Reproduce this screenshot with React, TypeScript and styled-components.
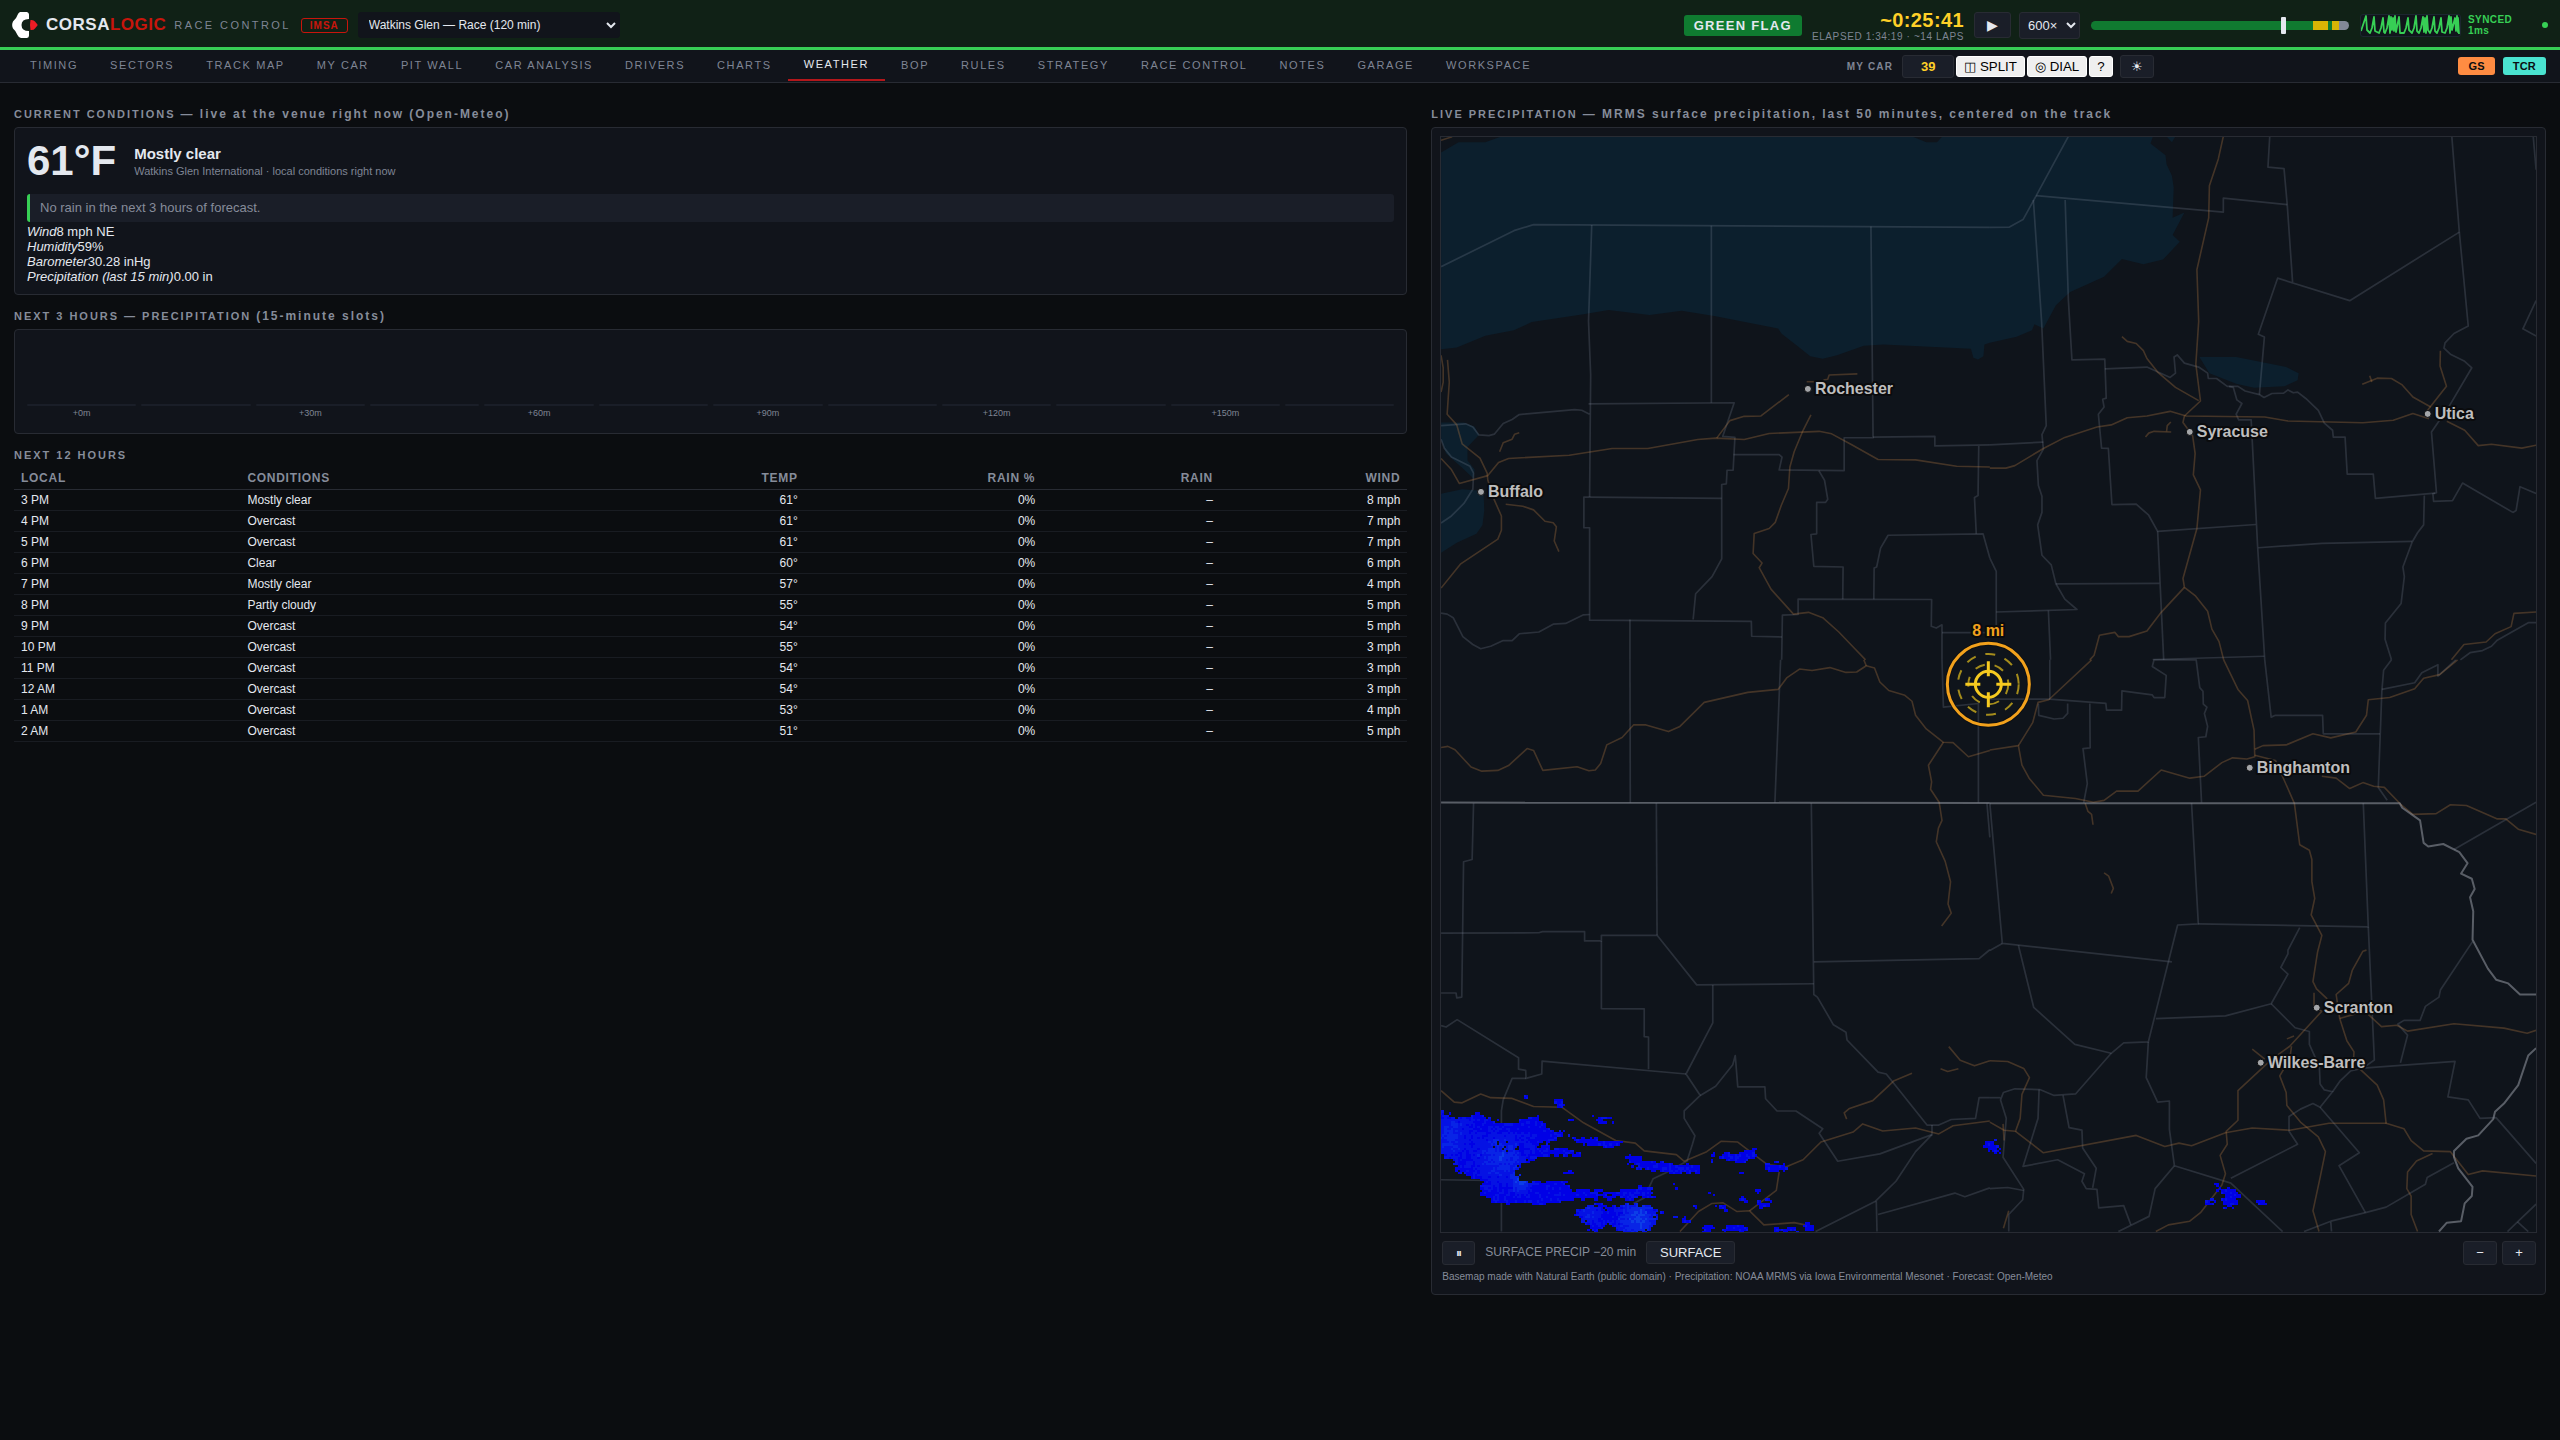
import React from 'react';
import styled, { createGlobalStyle, css } from 'styled-components';

const c = {
  bg: '#0b0d10',
  panel: '#11141b',
  raised: '#1a1e28',
  line: '#282b33',
  text: '#e4e8ef',
  muted: '#7f8594',
  heading: '#868c9a',
  red: '#c8150c',
  green: '#37cf55',
  yellow: '#ffd028',
};

const GlobalStyle = createGlobalStyle`
  *, *::before, *::after { box-sizing: border-box; }
  body {
    margin: 0;
    background: ${c.bg};
    color: ${c.text};
    font: 13px/15px "Liberation Sans", Arial, sans-serif;
  }
`;

/* ---------- header ---------- */

const Header = styled.header`
  display: flex;
  align-items: center;
  height: 50px;
  padding: 3px 12px 0;
  background: #102116;
  border-bottom: 3px solid ${c.green};
`;

const Brand = styled.div`
  display: flex;
  align-items: center;
  gap: 8px;
`;

const BrandName = styled.h1`
  margin: 0;
  font-size: 17px;
  line-height: 20px;
  font-weight: 700;
  letter-spacing: 0.03em;
  span { color: ${c.red}; }
`;

const BrandSub = styled.span`
  font-size: 11px;
  color: ${c.muted};
  letter-spacing: 0.22em;
`;

const SeriesPill = styled.span`
  margin: 0 10px;
  padding: 1px 8px;
  border: 1px solid ${c.red};
  border-radius: 3px;
  color: ${c.red};
  font-size: 10px;
  line-height: 11px;
  font-weight: 700;
  letter-spacing: 0.1em;
`;

const Select = styled.select<{ $wide?: boolean }>`
  font: ${p => (p.$wide ? 12 : 13)}px "Liberation Sans", Arial, sans-serif;
  color: ${c.text};
  background: ${p => (p.$wide ? c.panel : c.raised)};
  border: 1px solid ${p => (p.$wide ? c.panel : c.line)};
  border-radius: 3px;
  width: ${p => (p.$wide ? 262 : 61)}px;
  height: ${p => (p.$wide ? 26 : 27)}px;
  padding: 0 ${p => (p.$wide ? 6 : 4)}px;
`;

const HeaderRight = styled.div`
  display: flex;
  align-items: center;
  gap: 10px;
  margin-left: auto;
`;

const FlagBadge = styled.strong`
  padding: 3px 10px;
  border-radius: 3px;
  background: #0f7b30;
  font-size: 13px;
  letter-spacing: 0.1em;
`;

const Clock = styled.div`
  text-align: right;
  strong {
    display: block;
    font-size: 20px;
    line-height: 22px;
    letter-spacing: 0.02em;
    color: ${c.yellow};
  }
  span {
    display: block;
    font-size: 10px;
    line-height: 11px;
    letter-spacing: 0.06em;
    color: ${c.muted};
  }
`;

const DarkButton = styled.button<{ $w: number; $h?: number; $size?: number }>`
  display: inline-flex;
  align-items: center;
  justify-content: center;
  width: ${p => p.$w}px;
  height: ${p => p.$h ?? 24}px;
  padding: 0;
  border: 1px solid ${c.line};
  border-radius: 3px;
  background: ${c.raised};
  color: ${c.text};
  font: ${p => p.$size ?? 13}px "Liberation Sans", Arial, sans-serif;
`;

const Playback = styled.div`
  display: flex;
  align-items: center;
  gap: 8px;
`;

const thumb = css`
  width: 5px;
  height: 17px;
  border: 0;
  border-radius: 1px;
  background: ${c.text};
`;

const Scrubber = styled.input`
  appearance: none;
  width: 258px;
  height: 17px;
  margin: 0 1px;
  background: transparent;
  &::-webkit-slider-runnable-track {
    height: 9px;
    border-radius: 5px;
    background: linear-gradient(
      90deg,
      #107a30 0 86%, #d9b505 86% 92%, #107a30 92% 93.5%,
      #d9b505 93.5% 96.2%, #828896 96.2%
    );
  }
  &::-webkit-slider-thumb {
    appearance: none;
    margin-top: -4px;
    ${thumb}
  }
`;

const Pulse = styled.svg`
  display: block;
  width: 101px;
  height: 23px;
  border: 1px solid #1c2630;
  border-radius: 3px;
  background: #10161b;
`;

const Sync = styled.div`
  width: 64px;
  margin-left: -3px;
  color: ${c.green};
  font-size: 10px;
  line-height: 11px;
  font-weight: 700;
  letter-spacing: 0.04em;
`;

const StatusDot = styled.i`
  width: 6px;
  height: 6px;
  border-radius: 50%;
  background: ${c.green};
`;

/* ---------- navigation ---------- */

const Nav = styled.nav`
  display: flex;
  align-items: center;
  justify-content: space-between;
  height: 33px;
  padding: 0 14px;
  background: ${c.panel};
  border-bottom: 1px solid ${c.line};
`;

const Tabs = styled.div`
  display: flex;
  align-self: stretch;
`;

const Tab = styled.a<{ $active?: boolean }>`
  display: flex;
  align-items: center;
  padding: 0 16px;
  margin-bottom: 1px;
  border-bottom: ${p => (p.$active ? '2px solid #b3171b' : '0')};
  color: ${p => (p.$active ? c.text : c.muted)};
  font-size: 11px;
  letter-spacing: 0.145em;
  text-decoration: none;
`;

const Tools = styled.div`
  display: flex;
  align-items: center;
  gap: 2px;
  margin-right: 5px;
`;

const CarLabel = styled.label`
  margin-right: 7px;
  color: ${c.muted};
  font-size: 10px;
  font-weight: 700;
  letter-spacing: 0.12em;
`;

const CarInput = styled.input`
  width: 52px;
  height: 23px;
  border: 1px solid ${c.line};
  border-radius: 3px;
  padding: 0;
  background: ${c.raised};
  color: ${c.yellow};
  text-align: center;
  font: 700 13px "Liberation Sans", Arial, sans-serif;
`;

const LightButton = styled.button`
  height: 21px;
  padding: 0 7px;
  border: 1px solid #fff;
  border-radius: 3px;
  background: #efefef;
  color: #000;
  font-family: "Liberation Sans", Arial, sans-serif;
`;

const ThemeSlot = styled.span`
  display: flex;
  margin-left: 5px;
`;

const ClassTags = styled.div`
  display: flex;
  gap: 8px;
`;

const ClassTag = styled.span<{ $color: string }>`
  padding: 3px 10px;
  border-radius: 3px;
  background: ${p => p.$color};
  color: #0b0d10;
  font-size: 11px;
  line-height: 12px;
  font-weight: 700;
  letter-spacing: 0.02em;
`;

/* ---------- page ---------- */

const Main = styled.main`
  display: grid;
  grid-template-columns: minmax(0, 1.25fr) minmax(0, 1fr);
  align-items: start;
  gap: 24px;
  padding: 24px 14px;
`;

const Column = styled.div`
  display: flex;
  flex-direction: column;
  gap: 14px;
`;

const SectionTitle = styled.h2`
  margin: 0 0 6px;
  color: ${c.heading};
  font-size: 11px;
  line-height: 14px;
  font-weight: 700;
  letter-spacing: 0.18em;
  span { font-size: 12px; }
`;

const Card = styled.div<{ $tight?: boolean }>`
  padding: ${p => (p.$tight ? '8px' : '10px 12px')};
  border: 1px solid ${c.line};
  border-radius: 4px;
  background: ${c.panel};
`;

const Now = styled.div`
  display: flex;
  align-items: center;
  gap: 18px;
  margin-bottom: 10px;
`;

const Temp = styled.strong`
  font-size: 42px;
  line-height: 46px;
`;

const Summary = styled.div`
  strong {
    display: block;
    margin-bottom: 3px;
    font-size: 15px;
    line-height: 17px;
  }
  span {
    display: block;
    color: ${c.muted};
    font-size: 11px;
    line-height: 13px;
  }
`;

const Outlook = styled.p`
  margin: 0 0 2px;
  padding: 7px 10px;
  border-left: 3px solid ${c.green};
  border-radius: 3px;
  background: ${c.raised};
  color: ${c.heading};
  line-height: 14px;
`;

const Slots = styled.div`
  display: grid;
  grid-template-columns: repeat(12, 1fr);
  gap: 5px;
  height: 83px;
`;

const Slot = styled.div`
  display: grid;
  grid-template-rows: 66px 12px;
  align-items: end;
  text-align: center;
  color: ${c.muted};
  font-size: 9px;
  line-height: 10px;
`;

const SlotBar = styled.div`
  height: 2px;
  border-radius: 1px;
  background: ${c.raised};
`;

const Table = styled.table`
  width: 100%;
  table-layout: fixed;
  border-collapse: collapse;
  font-size: 12px;
  line-height: 14px;
`;

const Cell = styled.td<{ $right?: boolean }>`
  height: 21px;
  padding: 3px 7px;
  border-bottom: 1px solid #191c22;
  text-align: ${p => (p.$right ? 'right' : 'left')};
`;

const HeadCell = styled(Cell)`
  border-bottom-color: ${c.line};
  color: ${c.heading};
  font-weight: 700;
  letter-spacing: 0.06em;
`;

const MapCanvas = styled.svg`
  display: block;
  width: 100%;
  aspect-ratio: 1;
  border: 1px solid ${c.line};
  background: #0f141b;
`;

const CityText = styled.text<{ $accent?: boolean }>`
  font: 700 16px "Liberation Sans", Arial, sans-serif;
  fill: ${p => (p.$accent ? '#f2a11c' : '#bebebe')};
  stroke: #0a0b0d;
  stroke-width: 4px;
  stroke-linejoin: round;
  paint-order: stroke;
`;

const MapControls = styled.div`
  display: flex;
  align-items: center;
  gap: 10px;
  padding: 8px 1px 6px 2px;
  color: ${c.heading};
  font-size: 12px;
`;

const ZoomButtons = styled.div`
  display: flex;
  gap: 5px;
  margin-left: auto;
`;

const Credits = styled.p`
  margin: 0 2px 3px;
  color: ${c.heading};
  font-size: 10px;
  line-height: 12px;
`;

/* ---------- data ---------- */

const tabs = ['TIMING', 'SECTORS', 'TRACK MAP', 'MY CAR', 'PIT WALL', 'CAR ANALYSIS', 'DRIVERS', 'CHARTS', 'WEATHER', 'BOP', 'RULES', 'STRATEGY', 'RACE CONTROL', 'NOTES', 'GARAGE', 'WORKSPACE'];

const readings = [
  ['Wind', '8 mph NE'],
  ['Humidity', '59%'],
  ['Barometer', '30.28 inHg'],
  ['Precipitation (last 15 min)', '0.00 in'],
];

const hours: [string, string, number, number][] = [
  ['3 PM', 'Mostly clear', 61, 8],
  ['4 PM', 'Overcast', 61, 7],
  ['5 PM', 'Overcast', 61, 7],
  ['6 PM', 'Clear', 60, 6],
  ['7 PM', 'Mostly clear', 57, 4],
  ['8 PM', 'Partly cloudy', 55, 5],
  ['9 PM', 'Overcast', 54, 5],
  ['10 PM', 'Overcast', 55, 3],
  ['11 PM', 'Overcast', 54, 3],
  ['12 AM', 'Overcast', 54, 3],
  ['1 AM', 'Overcast', 53, 4],
  ['2 AM', 'Overcast', 51, 5],
];

/* Basemap geometry, kept per tile in tile units. */
type Tile = { x: number; y: number; sx: number; sy: number; county: string[]; road: string[]; border?: string[]; water?: string[] };

const tiles: Tile[] = [
  {
    x: -10, y: -36, sx: 1 / 2.8, sy: 1 / 2.8,
    water: [
      '31,147 80,118 155,118 200,102 1350,102 1390,118 1420,118 1435,102 2025,102 2018,122 2060,155 2063,180 2078,212 2083,245 2080,330 2113,315 2080,378 2100,397 2053,447 1998,460 1938,445 1888,495 1793,538 1753,575 1718,640 1693,628 1686,645 1643,663 1568,680 1553,685 1550,718 1535,727 1522,722 1515,697 1270,685 1215,688 1140,715 1100,725 1065,718 1030,690 985,655 975,640 800,606 705,590 615,602 500,588 430,600 285,622 235,645 155,660 75,693 31,698',
      '2063,102 2078,118 2088,102',
      '31,903 95,903 125,915 137,938 105,972 105,1010 125,1035 122,1060 90,1030 45,990 31,950',
      '31,1103 90,1090 150,1095 152,1150 147,1190 130,1215 75,1240 31,1268',
      '2155,720 2258,720 2398,748 2433,765 2430,785 2393,802 2308,806 2258,795 2183,765',
    ],
    county: [
      '31,467 235,366 290,349 1568,357',
      '453,350 444,620 450,770 447,1112',
      '788,352 788,848', '444,851 852,848 820,942 854,945 849,1037 832,1037 830,1075 817,1077 817,1285 790,1335 744,1383 737,1455',
      '1235,354 1241,946 1160,946 1160,1038 978,1036 986,1000 978,993 850,993',
      '1241,944 1414,942 1414,969 1568,966',
      '447,1112 817,1116', '447,1112 431,1112 431,1198 447,1198 447,1457 900,1460 901,1502 986,1504',
      '560,1455 560,1568',
      '31,912 100,907 120,916 137,938 165,940 180,936 205,906 230,895 250,881 405,867 425,869 447,880',
      '31,950 40,975 60,1000 112,1026 122,1045 120,1090 95,1130 60,1165 31,1185',
      '31,1437 48,1440 65,1450 92,1503 120,1525 142,1537 170,1530 205,1514 230,1514 250,1495 305,1490 345,1468 380,1466 430,1442 447,1441',
      '1089,1038 1105,1065 1114,1118 1108,1127 1083,1127 1083,1215 1067,1217 1075,1306 1157,1308 1156,1398',
      '1537,969 1535,1108 1525,1113 1530,1215', '1243,1398 1244,1311 1251,1308 1262,1255 1283,1219 1549,1215 1568,1283',
      '985,1568 987,1443 1031,1441 1031,1398 1405,1399 1404,1474 1418,1479 1434,1470 1434,1568', '1434,1492 1568,1492',
    ],
    road: [
      '31,715 37,750 37,790 31,818', '49,728 54,790 48,880 75,910 90,963 140,1003 160,1045 162,1065 180,1120 200,1165 200,1205 190,1230 85,1300 31,1367',
      '31,1004 60,1035 82,1074 162,1052 192,1015 220,1004 390,995 510,976 610,976 750,951 800,947 880,951 950,934 1090,928 1125,935 1180,965 1255,1007 1360,1008 1475,1026 1568,1028',
      '195,985 205,960 230,950 237,936 250,932', '212,1132 260,1138 290,1148 322,1180 345,1184 354,1195 348,1235 361,1265',
      '803,947 840,898 880,886 927,885 1005,825', '1055,789 1075,789', '1102,784 1114,782 1118,770 1197,767',
      '1067,882 1045,925 1020,985 1008,1028 1004,1088 984,1135 967,1183 950,1200 908,1214 905,1270 930,1297 922,1310 955,1370 1018,1440 1060,1435 1100,1450 1145,1490 1190,1537 1220,1568',
      '31,113 62,103',
    ],
  },
  {
    x: 550, y: -36, sx: 1 / 2.8, sy: 1 / 2.8,
    county: [
      '0,357 55,356 93,335 130,268 220,102', '122,280 145,620 158,912 146,937 150,978 132,1010 136,1080 146,1110 146,1155 134,1190 146,1275 172,1302 185,1355 210,1398 244,1427 18,1434',
      '130,268 654,314 654,275 833,293', '211,280 220,560 230,728 322,726 326,835 316,838 320,860 304,880 313,975 332,976 342,1133 410,1132 445,1163 470,1208 745,1189',
      '322,753 440,748 505,777 520,765 516,720 525,714 545,737 585,748 610,765 612,780 635,780 665,802 695,802 715,815 755,825 768,833 790,822 823,821 835,812 850,820 862,818 885,836 920,869 937,905 960,925 962,944 995,944 1001,1048 1074,1048 1080,1116 1247,1101',
      '0,966 150,958', '670,802 682,805 692,840 706,850 690,880 697,896 732,896 750,1250 770,1568', '755,825 769,664 752,656 806,499 1008,562 1315,370',
      '784,102 779,188 824,192 833,293 848,510', '1294,102 1315,370 1340,633 1300,654 1275,680 1272,695 1290,712 1330,732 1350,750 1285,860 1237,930 1251,1100 1241,1103 1243,1124 1296,1122 1324,1073 1465,1155 1474,1150 1485,1083 1530,1102',
      '1522,102 1530,195', '1530,562 1493,641 1530,661', '470,1208 487,1568', '185,1355 475,1354', '752,1254 930,1242 1183,1236',
      '1217,1108 1215,1190 1198,1212 1183,1238 1157,1308 1161,1335 1152,1410 1108,1465 1107,1510 1125,1568', '164,1430 170,1568', '0,1283 18,1320 18,1500', '456,1567 769,1558', '1530,1464 1508,1464 1420,1514 1405,1530 1380,1542 1345,1548 1318,1568',
    ],
    road: [
      '654,102 640,165 615,240 613,330 580,475 585,620 577,740 590,843 545,885 541,903 568,940 575,990 570,1050 590,1092 580,1200 541,1340 545,1365 575,1388 610,1432 622,1482 642,1517 655,1568',
      '370,663 385,676 410,682 430,702 440,724 470,762 520,805 585,842', '0,1031 45,1031 70,1024 150,976 210,945 300,916 340,910 385,890 440,885 505,872 550,885 770,888 835,899 1045,904 1130,897 1185,878 1230,893',
      '436,944 445,933 460,928 508,930', '495,928 497,912 507,902',
      '1043,796 1085,779 1125,780 1155,798 1185,832 1235,860', '1064,772 1070,790', '1262,702 1261,745 1279,802 1225,870', '1280,900 1330,925 1368,968 1405,964 1490,975 1530,967',
      '545,1365 480,1435 440,1487 390,1503 360,1503 350,1491 307,1499 292,1555 280,1568', '1530,1434 1468,1438 1460,1475 1415,1495 1390,1518 1328,1525 1293,1568',
    ],
  },
  {
    x: -10, y: 524, sx: 1 / 2.8, sy: 1 / 2.7034,
    border: ['31,386 1568,387'],
    county: [
      '560,0 561,386', '982,0 966,386', '1434,0 1438,128 1536,118 1536,386', '122,388 118,540 94,546 89,912 75,914 73,901 31,901', '31,739 305,738 315,735 433,735 433,760 480,760 480,745 636,745 747,879 1075,876',
      '634,388 636,745', '1068,388 1075,905 1085,912 1130,987 1165,1007 1168,1028 1255,1115 1278,1120 1392,1258 1425,1258 1460,1243 1528,1240 1538,1184 1568,1184', '1075,817 1538,808 1568,784', '480,760 480,943 600,944 600,1019 612,1020 612,1107', '792,879 792,982 717,1120 757,1178 712,1220 712,1240 742,1287 735,1310 720,1355 665,1385 625,1403 600,1455 570,1470',
      '31,989 45,993 76,973 248,1076 248,1107 268,1110 269,1132 313,1120 314,1085 717,1120', '269,1132 230,1132 205,1190 200,1220 200,1546', '757,1178 800,1153 848,1095 855,1070 862,1155 938,1155 940,1187 972,1220 1025,1220 1100,1268 1090,1280 1142,1356 1260,1336 1406,1284 1406,1258',
      '1406,1284 1360,1330 1305,1410 1248,1464 1080,1546', '1250,1464 1252,1546', '1255,1500 1470,1442 1498,1452 1568,1428', '31,1406 160,1408', '1560,388 1568,480',
    ],
    road: [
      '31,237 50,234 70,243 115,290 145,301 190,299 220,286 272,240 290,245 316,299 412,289 445,300 463,298 478,280 495,230 538,210 570,176 605,176 668,194 700,180 768,115 890,88 975,80 1000,48 1035,25 1070,29 1120,21 1165,34 1195,33 1222,16 1245,22 1260,60 1285,83 1330,96 1350,112 1360,150 1390,187 1438,223 1465,224 1508,262 1568,245',
      '1215,0 1222,16', '1438,223 1396,285 1405,330 1402,350 1426,385 1434,434 1424,455 1418,492 1443,545 1458,600 1451,660 1460,685 1433,720', '1453,1046 1485,1083 1525,1098 1568,1084', '1430,1106 1450,1113 1480,1106', '1350,1118 1300,1138 1240,1192 1175,1213 1160,1225 1167,1242',
      '31,1165 68,1196 90,1198 142,1174 170,1184 230,1186 290,1208 370,1210 430,1252 520,1300 575,1307 600,1328 690,1338 712,1356 775,1330 815,1302 862,1304 945,1365 998,1371 1045,1352 1095,1304 1185,1277 1212,1255 1268,1274 1360,1266 1425,1282 1465,1260 1568,1247',
      '700,1546 752,1492 790,1470 820,1468 860,1492 895,1490 935,1528 1020,1522 1060,1530', '895,1490 970,1435 978,1385',
    ],
  },
  {
    x: 550, y: 524, sx: 1 / 2.8, sy: 1 / 2.7034,
    border: [
      '0,388 1148,388 1155,400 1205,434 1215,495 1228,505 1270,498 1315,520 1338,550 1320,578 1350,592 1358,620 1345,642 1354,680 1352,757 1395,835 1418,865 1452,875 1485,905 1530,905',
      '1530,1050 1508,1070 1480,1150 1440,1200 1415,1222 1410,1242 1368,1286 1335,1295 1300,1328 1300,1345 1312,1375 1352,1425 1350,1450 1330,1470 1320,1518 1280,1522 1258,1546',
    ],
    county: [
      '168,0 168,106 325,118 327,136 369,136 370,84 455,95 460,102 490,102 494,42 455,18 460,0 578,0 588,75 597,85 598,120 608,128 601,145 610,180 605,208 584,210 593,386', '0,106 168,106', '136,118 137,150 180,160 205,158 218,145 218,118', '280,118 281,238 261,240 273,335 263,386',
      '770,0 788,155 800,150 932,150 934,200 1093,200', '1125,0 1103,28 1098,85 1088,345 1113,380', '1098,80 1190,62 1210,35 1255,13 1255,44 1305,0', '0,388 35,767 510,817', '0,786 35,767', '80,772 123,940 238,1040 340,1064 375,1036 444,1033 526,717 584,714 565,388', '584,714 1060,722 1046,388', '1060,722 1077,1082 1045,1104 1303,1086 1283,1182 1340,1190 1373,1240 1418,1238 1530,1362',
      '868,724 835,785 835,795 815,832 835,850 788,930 660,963 465,970', '788,930 855,995 895,1005 895,1040 923,1100 925,1147 937,1163 960,1168 925,1210 905,1200 870,1215 838,1235 838,1275 862,1310 675,1402', '960,1168 980,1140 1010,1112 1045,1104', '925,1210 1035,1333 978,1368 1052,1495', '1530,385 1300,513', '1352,762 1262,893 1258,912 1220,937 1205,975 1160,975 1143,985 1170,1015 1150,1090',
      '444,1033 438,1130 470,1196 503,1193 503,1270 517,1368 675,1415 820,1546', '517,1368 463,1430 446,1505 360,1546', '340,1064 240,1174 180,1178 140,1162 70,1160 38,1170 30,1190 46,1240 37,1345 95,1432 92,1460 53,1500 53,1546', '138,1162 135,1240 93,1370 190,1352 265,1390 258,1410 270,1430 300,1432 305,1482 375,1476 395,1528', '205,1178 222,1265 258,1272 260,1320 298,1375 288,1428', '0,1430 50,1427 95,1435', '880,1546 955,1518 1052,1495 1110,1480 1220,1418 1225,1400 1300,1360', '955,1520 957,1546', '1530,1472 1478,1520 1450,1546', '1478,1520 1508,1546', '0,1184 30,1184',
    ],
    road: [
      '655,0 695,80 722,110 740,190 742,262 720,268 680,265 650,278 600,315 560,320 480,298 415,355 355,355 320,380 290,385 240,375 150,366 110,320 90,285 80,232 0,244', '285,0 165,108 135,115 120,170 80,232', '267,388 275,410 285,418 289,446', '320,576 333,585 346,618 340,632', '742,242 765,232 830,230 905,200 955,211 1025,195 1055,150 1060,108 1120,102 1190,78 1215,50 1260,40 1310,0',
      '742,258 800,272 853,388 868,500 895,515 902,540 902,600 910,645 900,690 930,745 918,790 905,870 915,890 945,917', '930,315 970,320 1008,348 1045,332 1075,342 1105,345 1150,390 1185,418 1250,416 1290,392 1335,394 1420,430 1445,430 1480,458 1530,472',
      '1055,785 1045,788 1015,840 1005,875 970,905 980,970 1000,1030 1020,1060 1018,1090 1085,1150 1103,1190 1110,1254', '980,970 1050,950 1097,992 1140,988 1170,1004 1300,984 1440,996 1505,1010 1530,1002', '908,900 908,940 930,950 840,1045 790,1080 695,1165 695,1245 662,1275 665,1310 645,1340 660,1390 650,1420 590,1495 560,1518 500,1528 465,1546', '735,1053 770,1080', '832,1025 852,1017', '845,1045 840,1080 812,1125 830,1170 832,1205 870,1250 920,1290 940,1330 925,1400 905,1490 922,1546',
      '0,1084 50,1086 95,1105 111,1130 90,1175 85,1240 72,1275 40,1272 0,1250', '72,1275 150,1333 410,1286 490,1316 530,1307 565,1314 660,1279 735,1266 840,1272 950,1253 1110,1253 1160,1268 1180,1300 1215,1328 1290,1330 1340,1392 1380,1382 1530,1396', '1240,1335 1195,1355 1170,1385 1168,1430 1180,1450 1180,1500 1198,1546', '37,1255 40,1300', '53,1490 38,1537',
    ],
  },
];

const cities: [string, number, number][] = [
  ['Rochester', 368, 253], ['Buffalo', 41, 356], ['Syracuse', 750, 296], ['Utica', 988, 278],
  ['Binghamton', 810, 632], ['Scranton', 877, 872], ['Wilkes-Barre', 821, 927],
];

/* Radar echoes: outlines in the units of the tile that holds them. */
const echoes: [number, string][] = [
  [2, '31,1222 75,1240 140,1226 165,1242 200,1252 240,1250 300,1233 330,1268 375,1278 340,1305 300,1312 330,1318 400,1325 430,1345 340,1340 290,1350 250,1370 235,1388 262,1412 330,1408 380,1410 400,1435 460,1430 500,1445 560,1430 620,1422 628,1450 560,1458 430,1458 390,1460 340,1472 240,1468 180,1465 145,1450 145,1420 150,1405 120,1400 80,1385 60,1350 31,1340'],
  [2, '345,1186 385,1197 388,1212 350,1206'], [2, '458,1236 514,1238 514,1249 458,1248'], [2, '258,1177 284,1184 270,1192'],
  [2, '385,1283 430,1293 500,1296 538,1303 520,1317 450,1314 400,1300'],
  [2, '548,1338 600,1352 660,1362 700,1362 760,1370 760,1386 680,1388 610,1378 560,1366'],
  [2, '800,1340 860,1333 905,1322 920,1340 870,1360 815,1354'], [2, '936,1362 1000,1363 990,1382 960,1388 940,1378'],
  [2, '405,1490 440,1473 490,1475 495,1510 480,1547 450,1547 440,1520 410,1510'], [2, '500,1476 620,1473 637,1500 630,1530 600,1547 540,1547 495,1520'],
  [2, '920,1463 957,1463 952,1478 918,1482'], [2, '702,1508 732,1508 728,1526 710,1522'], [2, '822,1532 885,1527 885,1547 822,1547'], [2, '958,1537 1027,1537 1027,1547 958,1547'],
  [2, '1045,1523 1082,1528 1072,1546 1048,1540'], [2, '380,1380 398,1380 398,1390 380,1390'], [2, '383,1240 405,1250 395,1256'], [2, '765,1530 790,1530 790,1547 765,1547'],
  [2, '795,1470 832,1475 830,1492 815,1485'], [2, '640,1490 660,1490 640,1510'], [2, '868,1455 885,1465 880,1478'], [2, '672,1508 695,1508 680,1520'], [2, '790,1335 797,1335 797,1360 790,1360'],
  [2, '680,1416 692,1416 692,1426 680,1426'], [2, '784,1434 792,1434 792,1443 784,1443'], [2, '868,1388 878,1388 878,1396 868,1396'], [2, '740,1474 752,1474 752,1482 740,1482'], [2, '914,1434 922,1434 922,1443 914,1443'],
  [2, '1546,1303 1580,1300 1594,1322 1594,1336 1570,1336 1550,1318'],
  [3, '634,1416 660,1430 706,1434 702,1457 682,1481 655,1481 655,1447 634,1437'], [3, '610,1462 632,1462 637,1478 612,1472'], [3, '748,1461 772,1461 772,1474 748,1474'],
];

const CELL = 2.2;

const noise = (x: number, y: number) => {
  const v = Math.sin(x * 12.9898 + y * 78.233) * 43758.5453;
  return v - Math.floor(v);
};

const inside = (pts: number[][], x: number, y: number) => {
  let hit = false;
  for (let i = 0, j = pts.length - 1; i < pts.length; j = i++) {
    const [xi, yi] = pts[i];
    const [xj, yj] = pts[j];
    if (yi > y !== yj > y && x < ((xj - xi) * (y - yi)) / (yj - yi) + xi) hit = !hit;
  }
  return hit;
};

const rainShades = ['#0000e6', '#0512e4', '#0824e6', '#0c3ee8'];

function rasterise() {
  const paths = rainShades.map(() => '');
  const seen = new Set<string>();
  echoes.forEach(([t, outline]) => {
    const tile = tiles[t];
    const pts = outline.split(' ').map(p => {
      const [x, y] = p.split(',').map(Number);
      return [tile.x + x * tile.sx, tile.y + y * tile.sy];
    });
    const xs = pts.map(p => p[0]);
    const ys = pts.map(p => p[1]);
    for (let gy = Math.floor(Math.min(...ys) / CELL) - 1; gy * CELL <= Math.max(...ys) + CELL; gy++) {
      for (let gx = Math.max(0, Math.floor(Math.min(...xs) / CELL) - 1); gx * CELL <= Math.max(...xs) + CELL; gx++) {
        const key = `${gx},${gy}`;
        if (seen.has(key)) continue;
        const x = (gx + 0.5) * CELL;
        const y = (gy + 0.5) * CELL;
        const jx = (noise(gx >> 1, gy) - 0.5) * 5;
        const jy = (noise(gy, gx >> 1) - 0.5) * 4;
        if (!inside(pts, Math.max(2, x + jx), y + jy)) continue;
        const gap = Math.hypot((x - 66) / 16, (y - 1008) / 8);
        if (gap < 1 && noise(gx + 5, gy + 3) > 0.7 + gap * 0.2) continue;
        seen.add(key);
        const core = Math.max(
          0,
          1 - Math.hypot(x - 198, y - 1083) / 26,
          1 - Math.hypot(x - 80, y - 1045) / 16,
          0.7 - Math.hypot(x - 60, y - 1022) / 50,
          0.6 - Math.hypot(x - 10, y - 1000) / 50,
          0.5 - Math.hypot(x - 150, y - 1078) / 30,
        );
        const shade = Math.min(3, Math.floor(core * 3 + noise(gx, gy + 9) * 1.3));
        paths[shade] += `M${(gx * CELL).toFixed(1)} ${(gy * CELL).toFixed(1)}h2.3v2.3h-2.3z`;
      }
    }
  });
  return paths;
}

const rain = rasterise();

const PrecipMap = () => (
  <MapCanvas viewBox="1 1 1095 1095" role="img" aria-label="Surface precipitation around the track">
    {tiles.map((t, i) => (
      <g key={i} transform={`translate(${t.x} ${t.y}) scale(${t.sx} ${t.sy})`} fill="none" strokeLinejoin="round">
        {t.water?.map(p => <polygon key={p} points={p} fill="#0c1f2d" />)}
      </g>
    ))}
    {tiles.map((t, i) => (
      <g key={i} transform={`translate(${t.x} ${t.y}) scale(${t.sx} ${t.sy})`} fill="none" strokeLinejoin="round">
        {t.county.map(p => <polyline key={p} points={p} stroke="#8c96aa" strokeOpacity="0.22" strokeWidth="1.7" vectorEffect="non-scaling-stroke" />)}
        {t.road.map(p => <polyline key={p} points={p} stroke="#c08244" strokeOpacity="0.3" strokeWidth="1.6" vectorEffect="non-scaling-stroke" />)}
        {t.border?.map(p => <polyline key={p} points={p} stroke="#b4b9c3" strokeOpacity="0.45" strokeWidth="2" vectorEffect="non-scaling-stroke" />)}
      </g>
    ))}
    {rain.map((d, i) => <path key={i} d={d} fill={rainShades[i]} shapeRendering="crispEdges" />)}
    {cities.map(([name, x, y]) => (
      <g key={name}>
        <circle cx={x} cy={y} r="3.5" fill="#a4a6a9" stroke="#0a0b0d" strokeWidth="1" />
        <CityText x={x + 7} y={y + 5}>{name}</CityText>
      </g>
    ))}
    <g fill="none" transform="translate(548.5 548.5)">
      <circle r="41" stroke="#0a0b0d" strokeOpacity="0.5" strokeWidth="5" />
      <circle r="41" stroke="#f2a11c" strokeWidth="3" />
      <g stroke="#a48c1c" strokeWidth="2" strokeDasharray="10 10">
        <circle r="30.4" />
        <circle r="20" />
      </g>
      <circle r="13" stroke="#f6ca20" strokeWidth="3" />
      <path d="M-23 0H-8M8 0H23M0-23V-8M0 8V23" stroke="#f6ca20" strokeWidth="3" />
    </g>
    <CityText $accent x="548.5" y="500" textAnchor="middle">8 mi</CityText>
  </MapCanvas>
);

const pulsePeaks = [5, 13, 22, 28, 30, 32, 34, 38, 47, 55, 62, 64, 66, 73, 80, 88, 90, 94, 96];
const pulseLine = '0,16 ' + pulsePeaks.map((x, i) => {
  const roomy = x - (pulsePeaks[i - 1] ?? 0) > 5;
  return (roomy ? `${x - 4},18 ${x - 2},13 ` : '') + `${x},${1 + (i % 3)} ${x + 1},${15 + (i % 4)}`;
}).join(' ') + ' 97,3 98,19';

const Logo = () => (
  <svg width="26" height="26" viewBox="0 0 26 26" aria-hidden="true">
    <path d="M8 0H15Q17 .5 17 2.500V7Q9.500 7 9.500 13T17 19V23.500Q17 25.500 15 26H9Q6.500 25.500 5.500 23Q4 19 1 16.500Q-.7 13 1 9.500Q4.500 6.500 5.500 3Q6.200.8 8 0Z" fill="#fff" />
    <path d="M18.500 8Q21.500 7.500 23 9.500Q24.200 11 25.300 12.200Q25.800 13 25.300 13.800Q24.200 15 23 16.500Q21.500 18.500 18.500 18Q17.500 13 18.500 8Z" fill="#ee1c25" />
  </svg>
);

export default function App() {
  return (
    <>
      <GlobalStyle />
      <Header>
        <Brand>
          <Logo />
          <BrandName>CORSA<span>LOGIC</span></BrandName>
          <BrandSub>RACE CONTROL</BrandSub>
        </Brand>
        <SeriesPill>IMSA</SeriesPill>
        <Select $wide aria-label="Session"><option>Watkins Glen — Race (120 min)</option></Select>
        <HeaderRight>
          <FlagBadge>GREEN FLAG</FlagBadge>
          <Clock>
            <strong>~0:25:41</strong>
            <span>ELAPSED 1:34:19 · ~14 LAPS</span>
          </Clock>
          <Playback>
            <DarkButton $w={37} $h={26} $size={14} aria-label="Play">▶</DarkButton>
            <Select aria-label="Playback speed"><option>600×</option></Select>
          </Playback>
          <Scrubber type="range" min="0" max="1000" defaultValue="751" aria-label="Race position" />
          <Pulse viewBox="0 0 99 21" aria-hidden="true">
            <polyline points={pulseLine} fill="none" stroke={c.green} strokeWidth="1.800" strokeLinejoin="round" />
          </Pulse>
          <Sync>SYNCED<br />1ms</Sync>
          <StatusDot />
        </HeaderRight>
      </Header>

      <Nav>
        <Tabs>
          {tabs.map(t => <Tab key={t} href="#" $active={t === 'WEATHER'}>{t}</Tab>)}
        </Tabs>
        <Tools>
          <CarLabel htmlFor="car">MY CAR</CarLabel>
          <CarInput id="car" defaultValue="39" />
          <LightButton>◫ SPLIT</LightButton>
          <LightButton>◎ DIAL</LightButton>
          <LightButton>?</LightButton>
          <ThemeSlot><DarkButton $w={34} $h={23} aria-label="Theme">☀</DarkButton></ThemeSlot>
        </Tools>
        <ClassTags>
          <ClassTag $color="#ff8c42">GS</ClassTag>
          <ClassTag $color="#4ae3d0">TCR</ClassTag>
        </ClassTags>
      </Nav>

      <Main>
        <Column>
          <section>
            <SectionTitle>CURRENT CONDITIONS <span>— live at the venue right now (Open-Meteo)</span></SectionTitle>
            <Card>
              <Now>
                <Temp>61°F</Temp>
                <Summary>
                  <strong>Mostly clear</strong>
                  <span>Watkins Glen International · local conditions right now</span>
                </Summary>
              </Now>
              <Outlook>No rain in the next 3 hours of forecast.</Outlook>
              {readings.map(([name, value]) => <div key={name}><i>{name}</i>{value}</div>)}
            </Card>
          </section>

          <section>
            <SectionTitle>NEXT 3 HOURS — PRECIPITATION <span>(15-minute slots)</span></SectionTitle>
            <Card>
              <Slots>
                {Array.from({ length: 12 }, (_, i) => (
                  <Slot key={i}>
                    <SlotBar />
                    {i % 2 === 0 && <span>+{i * 15}m</span>}
                  </Slot>
                ))}
              </Slots>
            </Card>
          </section>

          <section>
            <SectionTitle>NEXT 12 HOURS</SectionTitle>
            <Table>
              <colgroup>
                <col width="16.25%" /><col width="28%" /><col width="12.5%" /><col width="17.05%" /><col width="12.75%" /><col width="13.45%" />
              </colgroup>
              <thead>
                <tr>
                  {['LOCAL', 'CONDITIONS', 'TEMP', 'RAIN %', 'RAIN', 'WIND'].map((h, i) => (
                    <HeadCell as="th" scope="col" key={h} $right={i > 1}>{h}</HeadCell>
                  ))}
                </tr>
              </thead>
              <tbody>
                {hours.map(([time, sky, temp, wind]) => (
                  <tr key={time}>
                    <Cell>{time}</Cell>
                    <Cell>{sky}</Cell>
                    <Cell $right>{temp}°</Cell>
                    <Cell $right>0%</Cell>
                    <Cell $right>–</Cell>
                    <Cell $right>{wind} mph</Cell>
                  </tr>
                ))}
              </tbody>
            </Table>
          </section>
        </Column>

        <section>
          <SectionTitle>LIVE PRECIPITATION <span>— MRMS surface precipitation, last 50 minutes, centered on the track</span></SectionTitle>
          <Card $tight>
            <PrecipMap />
            <MapControls>
              <DarkButton $w={33} $size={12} aria-label="Pause">⏸</DarkButton>
              <span>SURFACE PRECIP −20 min</span>
              <DarkButton $w={89} $h={23}>SURFACE</DarkButton>
              <ZoomButtons>
                <DarkButton $w={34} aria-label="Zoom out">−</DarkButton>
                <DarkButton $w={34} aria-label="Zoom in">+</DarkButton>
              </ZoomButtons>
            </MapControls>
            <Credits>Basemap made with Natural Earth (public domain) · Precipitation: NOAA MRMS via Iowa Environmental Mesonet · Forecast: Open-Meteo</Credits>
          </Card>
        </section>
      </Main>
    </>
  );
}
